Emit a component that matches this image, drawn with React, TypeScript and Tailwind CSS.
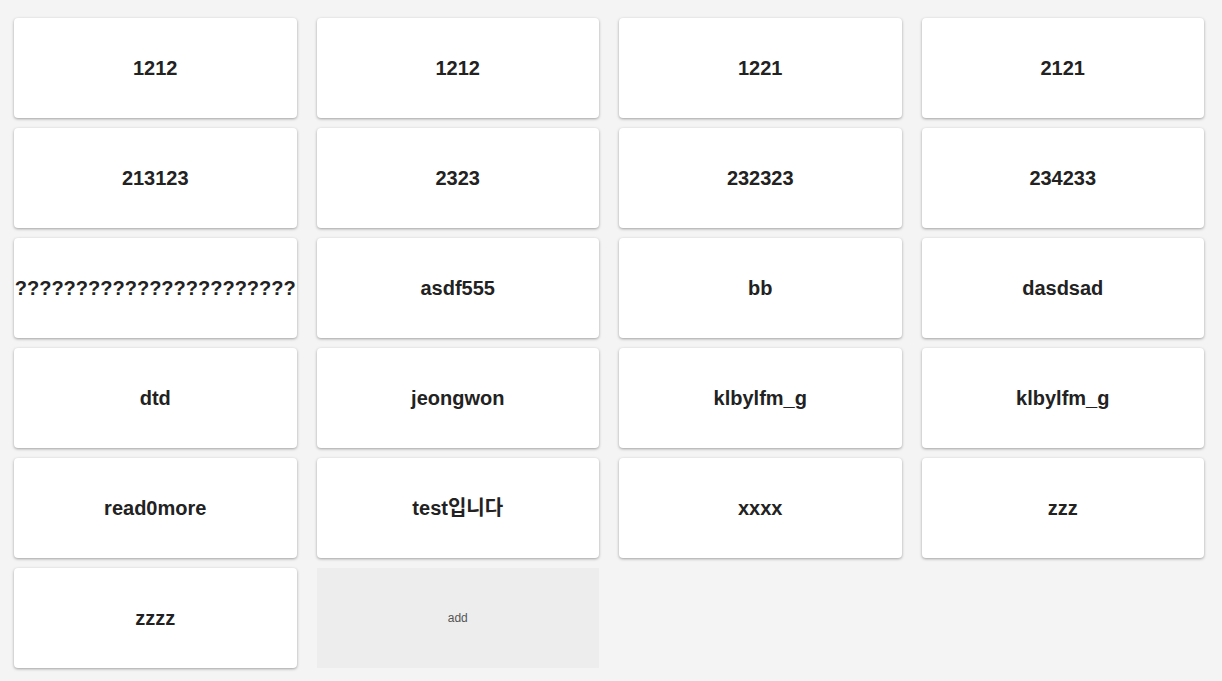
const names = [
  '1212', '1212', '1221', '2121',
  '213123', '2323', '232323', '234233',
  '???????????????????????', 'asdf555', 'bb', 'dasdsad',
  'dtd', 'jeongwon', 'klbylfm_g', 'klbylfm_g',
  'read0more', 'test입니다', 'xxxx', 'zzz',
  'zzzz',
];

export default function App() {
  return (
    <div
      className="min-h-screen bg-[#f4f4f4] pl-[14px] pr-[18px] pt-[18px] pb-4"
      style={{ fontFamily: '"Liberation Sans", Arial, "Noto Sans CJK KR", sans-serif' }}
    >
      <div className="grid grid-cols-4 gap-x-5 gap-y-[10px]">
        {names.map((name, i) => (
          <div
            key={i}
            className="h-[100px] flex items-center justify-center bg-white rounded-[4px] shadow-[0_1px_3px_rgba(0,0,0,0.35)] overflow-hidden whitespace-nowrap"
          >
            <span className="text-[20px] font-bold text-[#222]">{name}</span>
          </div>
        ))}
        <div className="h-[100px] flex items-center justify-center bg-[#ededed]">
          <span className="text-[12px] text-[#555]">add</span>
        </div>
      </div>
    </div>
  );
}
